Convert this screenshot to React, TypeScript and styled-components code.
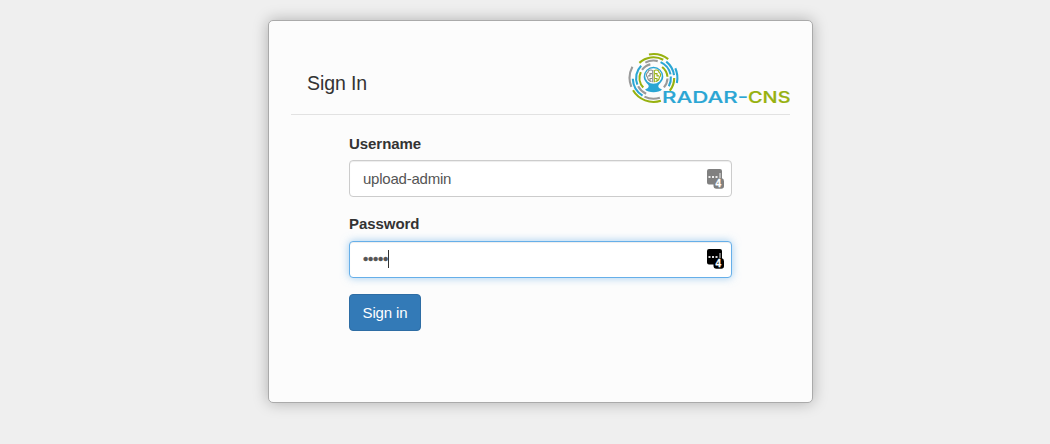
import React from "react";
import styled, { createGlobalStyle } from "styled-components";

const GlobalStyle = createGlobalStyle`
  * { box-sizing: border-box; }
  body {
    margin: 0;
    background: #efefef;
    color: #333;
    font: 15px/21px "Liberation Sans", Arial, sans-serif;
  }
`;

const Page = styled.main`
  display: flex;
  justify-content: center;
  height: 444px;
  padding: 20px 0 0 31px;
`;

const Card = styled.section`
  width: 545px;
  height: 383px;
  padding: 0 22px;
  border: 1px solid #aaa;
  border-radius: 5px;
  background: #fcfcfc;
  box-shadow: 0 0 15px rgba(0, 0, 0, 0.27);
`;

const Header = styled.header`
  display: flex;
  justify-content: space-between;
  height: 94px;
  padding: 29px 0 0 16px;
  border-bottom: 1px solid #e2e2e2;
`;

const Title = styled.h1`
  margin: 20px 0 0;
  font-size: 19.5px;
  font-weight: 400;
  line-height: 27px;
  letter-spacing: -0.1px;
`;

const Form = styled.form`
  display: flex;
  flex-direction: column;
  align-items: flex-start;
  padding: 18px 58px 0;
`;

const Label = styled.label`
  margin-bottom: 6px;
  height: 21px;
  font-weight: 700;
  letter-spacing: -0.05px;
`;

const Field = styled.div<{ $focused?: boolean }>`
  display: flex;
  align-items: center;
  width: 383px;
  height: 37px;
  margin-bottom: ${(p) => (p.$focused ? 16 : 17)}px;
  padding: 0 7px ${(p) => (p.$focused ? 2 : 0)}px 13px;
  border: 1px solid ${(p) => (p.$focused ? "#66afe9" : "#ccc")};
  border-radius: 4px;
  background: #fff;
  color: #555;
  letter-spacing: -0.23px;
  line-height: 19px;
  box-shadow: inset 0 1px 1px rgba(0, 0, 0, 0.075)
    ${(p) => (p.$focused ? ", 0 0 8px rgba(102, 175, 233, 0.6)" : "")};
`;

const Bullets = styled.span`
  width: 26px;
  -webkit-text-stroke: 0.4px #555;
`;

const Caret = styled.span`
  width: 1px;
  height: 18px;
  margin-left: -1px;
  background: #333;
`;

const ManagerIcon = styled.svg`
  margin-left: auto;
`;

const Submit = styled.button`
  width: 72px;
  height: 37px;
  padding: 0;
  border: 1px solid #2e6da4;
  border-radius: 4px;
  background: #337ab7;
  color: #fff;
  font: inherit;
  letter-spacing: -0.15px;
`;

const PasswordGroup = styled.div`
  display: flex;
  flex-direction: column;
  margin-top: -1px;
`;

const PasswordLabel = styled(Label)`
  margin-bottom: 7px;
`;

const blue = "#2ba6d4";
const green = "#97b10f";
const gray = "#9a9a9a";

const arcs: [number, number, number, string][] = [
  [23.9, -101, -52, green],
  [23.9, -24, 12, blue],
  [23.9, 72, 149, green],
  [23.9, 158, 208, gray],
  [20.7, -133, -62, green],
  [20.7, -52, -8, blue],
  [20.7, 0, 38, green],
  [20.7, 72, 116, gray],
  [20.7, 122, 178, blue],
  [17.4, -118, -76, gray],
  [17.4, -66, -12, blue],
  [17.4, -5, 28, blue],
  [17.4, 115, 152, gray],
  [17.4, 158, 225, blue],
  [14, -145, -103, gray],
  [14, -52, -5, green],
  [14, 2, 42, gray],
  [14, 137, 205, green],
];

const arcPath = (r: number, from: number, to: number) => {
  const at = (a: number) => {
    const t = (a * Math.PI) / 180;
    return `${(25.5 + r * Math.cos(t)).toFixed(2)} ${(28 + r * Math.sin(t)).toFixed(2)}`;
  };
  return `M${at(from)}A${r} ${r} 0 0 1 ${at(to)}`;
};

const Logo = () => (
  <svg width="162" height="56" viewBox="0 0 162 56" role="img" aria-label="RADAR-CNS">
    {arcs.map(([r, from, to, color], i) => (
      <path key={i} d={arcPath(r, from, to)} fill="none" stroke={color} strokeWidth="2.100" />
    ))}
    <g transform="translate(1 0)">
      <path
        d="M24.500 16.800a9.800 9.800 0 0 1 9.800 9.800c0 4-2.600 6.100-4.600 8.400-.7 1-.4 2.500.8 3.300l2.500 1.200C30 43 19 43 16 39.500l2.500-1.200c1.200-.8 1.500-2.300.8-3.300-2-2.300-4.600-4.400-4.600-8.400a9.800 9.800 0 0 1 9.800-9.800z"
        fill={blue}
      />
      <ellipse cx="24.500" cy="26" rx="8.300" ry="7.800" fill="#fcfcfc" />
      <g fill="none" strokeWidth="1.100">
        <path d="M23.700 20v12.300M23 20.300c-2-1-4 .4-4 2-2 1-2 4-.4 5 .1 2.600 2 4.500 4 4M23 23.600h-2v2.300h-2M23 28.500h-2v2" stroke="#8b8b8b" />
        <path d="M25.300 20v12.300M26 20.300c2-1 4 .4 4 2 2 1 2 4 .4 5-.1 2.600-2 4.500-4 4M26 23.600h2v2.300h2M26 28.500h2v2" stroke={green} />
      </g>
    </g>
    <g fontFamily="Inter, Liberation Sans, sans-serif" fontSize="16.500" fontWeight="500" strokeWidth=".2">
      <text x="34" y="52.700" fill={blue} stroke={blue} textLength="86" lengthAdjust="spacingAndGlyphs">RADAR-</text>
      <text x="120" y="52.700" fill={green} stroke={green} textLength="42.500" lengthAdjust="spacingAndGlyphs">CNS</text>
    </g>
  </svg>
);

const PasswordManager = ({ color }: { color: string }) => (
  <ManagerIcon width="17" height="20" viewBox="0 0 17 20">
    <path d="M2 0h11q2 0 2 2v7.300q2 .5 2 3V17q0 2.700-2.700 2.700H9.500q-3 0-3-3V15.500H2q-2 0-2-2V2Q0 0 2 0z" fill={color} />
    <path d="M1.500 7h2v2h-2zM5 7h2v2H5zM8.500 7h2v2h-2zM12.500 4h1v5h-1z" fill="#fff" opacity=".85" />
    <text x="8.500" y="18.300" fill="#fff" stroke="#fff" strokeWidth=".3" fontFamily="Liberation Sans, sans-serif" fontSize="10" fontWeight="700">4</text>
  </ManagerIcon>
);

export default function App() {
  return (
    <>
      <GlobalStyle />
      <Page>
        <Card>
          <Header>
            <Title>Sign In</Title>
            <Logo />
          </Header>
          <Form>
            <Label>Username</Label>
            <Field>
              upload-admin
              <PasswordManager color="#808080" />
            </Field>
            <PasswordGroup>
              <PasswordLabel>Password</PasswordLabel>
              <Field $focused>
                <Bullets>•••••</Bullets>
                <Caret />
                <PasswordManager color="#000" />
              </Field>
            </PasswordGroup>
            <Submit type="button">Sign in</Submit>
          </Form>
        </Card>
      </Page>
    </>
  );
}
